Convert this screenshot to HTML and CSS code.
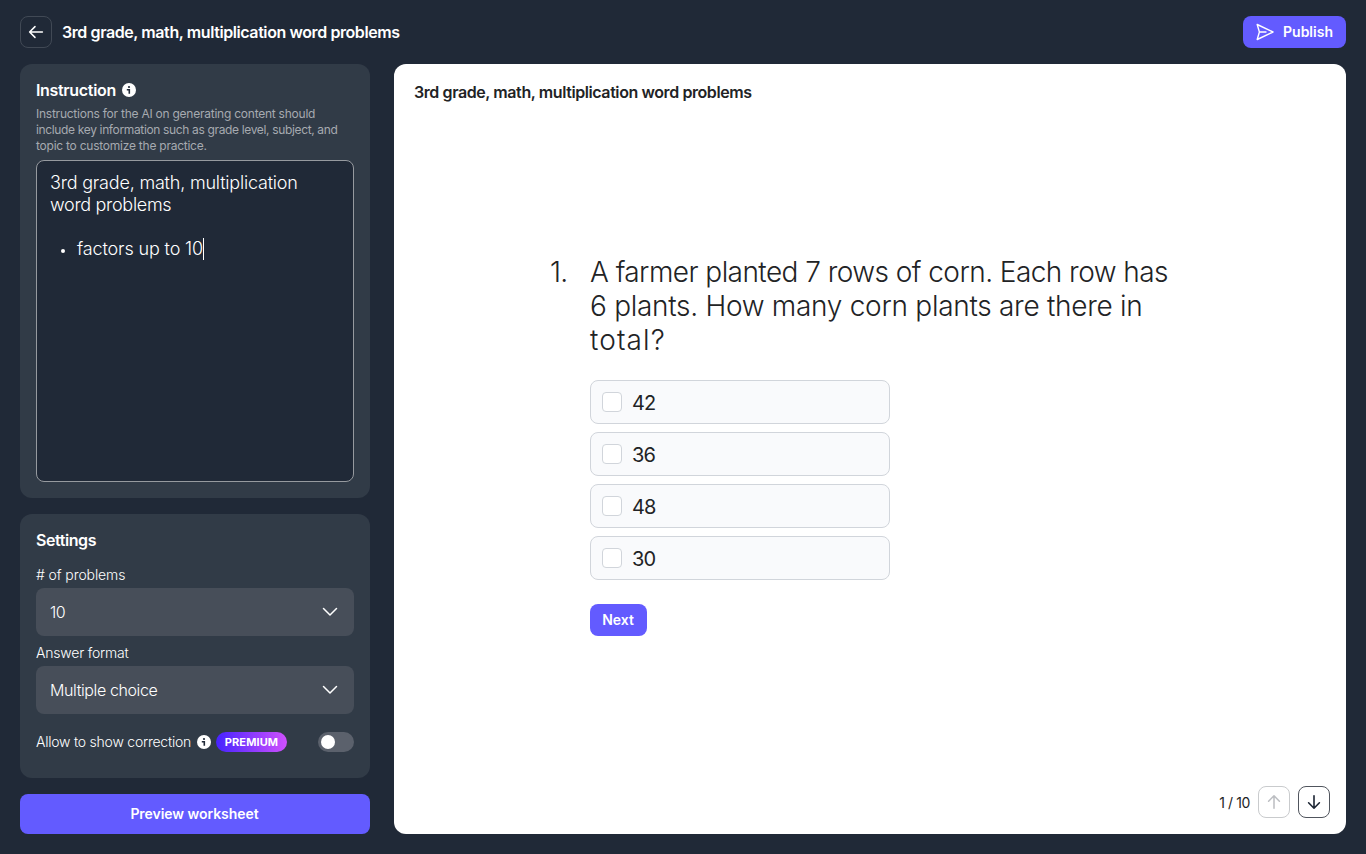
FILE: index.html
```html
<!DOCTYPE html>
<html lang="en">
<head>
<meta charset="utf-8">
<title>3rd grade, math, multiplication word problems</title>
<link rel="stylesheet" href="styles.css">
</head>
<body>
<div class="app">
  <header class="topbar">
    <button class="back" aria-label="Back">
      <svg width="16" height="16" viewBox="0 0 16 16" fill="none" stroke="#fff" stroke-width="1.5" stroke-linecap="round" stroke-linejoin="round"><path d="M14.4 8H1.6M7 2.6L1.6 8L7 13.4"/></svg>
    </button>
    <h1 class="title"><span class="t-title">3rd grade, math, multiplication word problems</span></h1>
    <button class="btn publish">
      <svg width="18" height="18" viewBox="0 0 18 18" fill="none" stroke="#fff" stroke-width="1.4" stroke-linecap="round" stroke-linejoin="round"><path d="M1.2 1.5L17 9L1.2 16.5L3.4 9ZM3.4 9H10"/></svg>
      <span class="t-publish">Publish</span>
    </button>
  </header>
  <main class="columns">
    <aside class="side">
      <section class="card instruction">
        <h2 class="heading"><span class="t-instruction">Instruction</span>
          <svg class="info" width="14" height="14" viewBox="0 0 14 14"><circle cx="7" cy="7" r="7" fill="#fff"/><circle cx="7" cy="4" r="1.1" fill="#202937"/><path d="M4.8 6.7H7.3V10.8" fill="none" stroke="#202937" stroke-width="1.6"/></svg>
        </h2>
        <p class="hint"><span class="t-h1">Instructions for the AI on generating content should</span><br><span class="t-h2">include key information such as grade level, subject, and</span><br><span class="t-h3">topic to customize the practice.</span></p>
        <div class="editor">
          <p><span class="t-e1">3rd grade, math, multiplication</span><br><span class="t-e2">word problems</span></p>
          <ul><li><span class="t-e3">factors up to 10</span><i class="caret"></i></li></ul>
        </div>
      </section>
      <section class="card settings">
        <h2 class="heading"><span class="t-settings">Settings</span></h2>
        <label class="label"><span class="t-l1"># of problems</span></label>
        <div class="select"><span class="t-ten">10</span>
          <svg width="16" height="10" viewBox="0 0 16 10" fill="none" stroke="#fff" stroke-width="1.5" stroke-linecap="round" stroke-linejoin="round"><path d="M1.5 1.5L8 8L14.5 1.5"/></svg>
        </div>
        <label class="label second"><span class="t-l2">Answer format</span></label>
        <div class="select"><span class="t-mc">Multiple choice</span>
          <svg width="16" height="10" viewBox="0 0 16 10" fill="none" stroke="#fff" stroke-width="1.5" stroke-linecap="round" stroke-linejoin="round"><path d="M1.5 1.5L8 8L14.5 1.5"/></svg>
        </div>
        <div class="allow">
          <span class="allow-text"><span class="t-allow">Allow to show correction</span></span>
          <svg class="info" width="14" height="14" viewBox="0 0 14 14"><circle cx="7" cy="7" r="7" fill="#fff"/><circle cx="7" cy="4" r="1.1" fill="#202937"/><path d="M4.8 6.7H7.3V10.8" fill="none" stroke="#202937" stroke-width="1.6"/></svg>
          <span class="premium"><span class="t-prem">PREMIUM</span></span>
          <span class="toggle"></span>
        </div>
      </section>
      <button class="btn preview"><span class="t-preview">Preview worksheet</span></button>
    </aside>
    <section class="sheet">
      <h2 class="sheet-title"><span class="t-title">3rd grade, math, multiplication word problems</span></h2>
      <div class="problem">
        <div class="number">1.</div>
        <div class="body">
          <p class="question"><span class="t-q1">A farmer planted 7 rows of corn. Each row has</span><br><span class="t-q2">6 plants. How many corn plants are there in</span><br><span class="t-q3">total?</span></p>
          <div class="options">
            <div class="option"><i class="box"></i><span>42</span></div>
            <div class="option"><i class="box"></i><span>36</span></div>
            <div class="option"><i class="box"></i><span>48</span></div>
            <div class="option"><i class="box"></i><span>30</span></div>
          </div>
          <button class="btn next"><span class="t-next">Next</span></button>
        </div>
      </div>
      <div class="pager">
        <span class="t-page">1 / 10</span>
        <button class="page off" aria-label="Previous"><svg width="16" height="16" viewBox="0 0 16 16" fill="none" stroke="#222936" stroke-width="1.5" stroke-linecap="round" stroke-linejoin="round"><path d="M8 14.2V1.8M2.6 7.2L8 1.8L13.4 7.2"/></svg></button>
        <button class="page" aria-label="Next page"><svg width="16" height="16" viewBox="0 0 16 16" fill="none" stroke="#1b2432" stroke-width="1.6" stroke-linecap="round" stroke-linejoin="round"><path d="M8 1.8V14.2M2.6 8.8L8 14.2L13.4 8.8"/></svg></button>
      </div>
    </section>
  </main>
</div>
</body>
</html>
```
FILE: styles.css
```css
* { box-sizing: border-box; margin: 0; padding: 0; }
body { font-family: Inter, "Liberation Sans", sans-serif; background: #202937; color: #fff; }
button { font: inherit; color: inherit; background: none; border: 0; }
svg { display: block; flex: none; }
span { white-space: nowrap; }
.app { width: 1366px; height: 854px; padding: 0 20px 20px; display: flex; flex-direction: column; overflow: hidden; }
.topbar { height: 64px; display: flex; align-items: center; }
.back { width: 32px; height: 32px; border: 1px solid #414955; border-radius: 8px; display: flex; align-items: center; justify-content: center; margin-right: 10px; }
.title { flex: 1; font-size: 16px; font-weight: 600; line-height: 24px; }
.btn { background: #635bff; border-radius: 8px; font-size: 14px; font-weight: 600; display: flex; align-items: center; justify-content: center; }
.publish { width: 103px; height: 32px; gap: 9px; padding-bottom: 1px; }
.columns { flex: 1; display: flex; gap: 24px; }
.side { width: 350px; display: flex; flex-direction: column; gap: 16px; }
.card { background: #313b47; border-radius: 12px; padding: 16px; }
.instruction { height: 434px; }
.settings { height: 264px; }
.heading { height: 20px; line-height: 20px; font-size: 16px; font-weight: 600; display: flex; align-items: center; gap: 6px; }
.hint { margin-top: 6px; font-size: 12px; line-height: 16px; color: #a6aab0; font-weight: 400; }
.editor { margin-top: 6px; height: 322px; border: 1px solid #969a9f; border-radius: 8px; background: #202937; padding: 11px 13px; font-size: 18px; line-height: 22px; font-weight: 300; }
.editor ul { list-style: none; margin-top: 22px; }
.editor li { height: 22px; display: flex; align-items: center; padding-left: 11px; }
.editor li::before { content: ""; width: 4px; height: 4px; border-radius: 50%; background: #fff; margin: 3px 12px 0 0; }
.caret { width: 1px; height: 22px; background: #fff; }
.label { display: block; height: 16px; margin-top: 17px; font-size: 14px; line-height: 16px; font-weight: 300; }
.second { margin-top: 9px; }
.select { margin-top: 5px; height: 48px; border-radius: 8px; background: #474e59; padding: 0 16px 0 14px; display: flex; align-items: center; justify-content: space-between; font-size: 16px; font-weight: 300; }
.allow { margin-top: 18px; height: 20px; display: flex; align-items: center; font-size: 14px; font-weight: 300; }
.allow-text { width: 155px; margin-right: 6px; padding-bottom: 1px; }
.premium { margin-left: 5px; width: 71px; height: 20px; border-radius: 10px; background: linear-gradient(90deg, #4623ff, #cf50fd); font-size: 11px; font-weight: 700; display: flex; align-items: center; justify-content: center; }
.toggle { margin-left: auto; width: 36px; height: 20px; border-radius: 10px; background: #5b616c; padding: 3px; }
.toggle::before { content: ""; display: block; width: 14px; height: 14px; border-radius: 50%; background: #fff; }
.preview { height: 40px; padding: 0 1px 1px 0; }
.sheet { flex: 1; background: #fff; color: #222325; border-radius: 12px; display: flex; flex-direction: column; padding: 16px 16px 16px 20px; }
.sheet-title { height: 24px; line-height: 24px; font-size: 16px; font-weight: 600; }
.problem { margin-top: 151px; padding-left: 136px; display: flex; font-size: 28px; line-height: 34px; font-weight: 300; }
.number { width: 40px; letter-spacing: -.8px; }
.options { margin-top: 23px; display: grid; gap: 8px; }
.option { width: 300px; height: 44px; border: 1px solid #d1d5db; border-radius: 8px; background: #f9fafc; display: flex; align-items: center; gap: 10px; padding-left: 11px; font-size: 20px; line-height: 24px; font-weight: 400; letter-spacing: -.8px; }
.option span { padding-top: 2px; }
.box { width: 20px; height: 20px; border: 1px solid #d1d5db; border-radius: 4px; background: #fff; }
.next { width: 57px; height: 32px; margin-top: 24px; padding-right: 1px; color: #fff; line-height: 20px; }
.pager { margin-top: auto; display: flex; align-items: center; justify-content: flex-end; gap: 8px; font-size: 14px; }
.page { width: 32px; height: 32px; border: 1px solid #50555d; border-radius: 8px; display: flex; align-items: center; justify-content: center; }
.off { opacity: .3; }

/* Per-string tracking */
.t-title { letter-spacing: -.41px; }
.t-instruction { letter-spacing: -.33px; }
.t-h1 { letter-spacing: -.24px; }
.t-h2 { letter-spacing: -.35px; }
.t-h3 { letter-spacing: -.24px; }
.t-e1 { letter-spacing: -.2px; }
.t-e2 { letter-spacing: -.3px; }
.t-e3 { letter-spacing: -.14px; }
.t-settings { letter-spacing: -.43px; }
.t-l1 { letter-spacing: -.1px; }
.t-l2 { letter-spacing: -.2px; }
.t-ten { letter-spacing: -.5px; }
.t-mc { letter-spacing: -.4px; }
.t-allow { letter-spacing: -.23px; }
.t-prem { letter-spacing: .1px; }
.t-preview { letter-spacing: -.05px; }
.t-q1 { letter-spacing: -.55px; }
.t-q2 { letter-spacing: -.28px; }
.t-q3 { letter-spacing: 1.1px; }
.t-page { letter-spacing: -.4px; }
```
